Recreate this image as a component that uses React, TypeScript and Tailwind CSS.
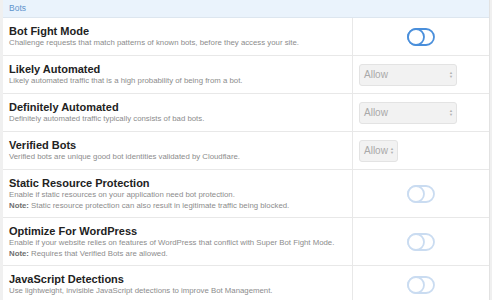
import React from 'react';

type Control =
  | { kind: 'toggle'; active: boolean }
  | { kind: 'select'; wide: boolean };

interface Setting {
  title: string;
  desc: string;
  note?: string;
  control: Control;
}

const SETTINGS: Setting[] = [
  {
    title: 'Bot Fight Mode',
    desc: 'Challenge requests that match patterns of known bots, before they access your site.',
    control: { kind: 'toggle', active: true },
  },
  {
    title: 'Likely Automated',
    desc: 'Likely automated traffic that is a high probability of being from a bot.',
    control: { kind: 'select', wide: true },
  },
  {
    title: 'Definitely Automated',
    desc: 'Definitely automated traffic typically consists of bad bots.',
    control: { kind: 'select', wide: true },
  },
  {
    title: 'Verified Bots',
    desc: 'Verified bots are unique good bot identities validated by Cloudflare.',
    control: { kind: 'select', wide: false },
  },
  {
    title: 'Static Resource Protection',
    desc: 'Enable if static resources on your application need bot protection.',
    note: 'Static resource protection can also result in legitimate traffic being blocked.',
    control: { kind: 'toggle', active: false },
  },
  {
    title: 'Optimize For WordPress',
    desc: 'Enable if your website relies on features of WordPress that conflict with Super Bot Fight Mode.',
    note: 'Requires that Verified Bots are allowed.',
    control: { kind: 'toggle', active: false },
  },
  {
    title: 'JavaScript Detections',
    desc: 'Use lightweight, invisible JavaScript detections to improve Bot Management.',
    control: { kind: 'toggle', active: false },
  },
];

function Toggle({ active }: { active: boolean }) {
  const color = active ? '#4a8fdb' : '#cadcf1';
  return (
    <svg width="28" height="18" viewBox="0 0 28 18" fill="none">
      <rect x="1" y="1" width="26" height="16" rx="8" stroke={color} strokeWidth="1.8" />
      <circle cx="9" cy="9" r="8" stroke={color} strokeWidth="1.8" fill="#fff" />
    </svg>
  );
}

function Select({ wide }: { wide: boolean }) {
  return (
    <div
      className={`flex items-center justify-between h-[22px] rounded-[3px] border border-[#e3e3e3] bg-[#f2f2f2] pl-[4px] pr-[3px] text-[10px] text-[#a9a9a9] ${
        wide ? 'w-[98px]' : 'w-[39px]'
      }`}
    >
      <span>Allow</span>
      <span className="flex flex-col text-[4px] leading-[4px] text-[#b0b0b0]">
        <span>▲</span>
        <span>▼</span>
      </span>
    </div>
  );
}

export default function App() {
  return (
    <div className="w-[492px] h-[300px] overflow-hidden bg-[#f0f0f0] pl-[3px] pr-[2px] font-['Liberation_Sans',Arial,sans-serif]">
      <div className="bg-white border-r border-[#e2e2e2] h-full">
        <div className="h-[18px] bg-[#eaf3fc] border-b border-[#dde6ef] pl-[6px] flex items-center text-[8.5px] text-[#5f93cc]">
          Bots
        </div>

        {SETTINGS.map((s) => (
          <div
            key={s.title}
            className={`grid grid-cols-[350px_1fr] border-b border-[#e8e8e8] ${s.note ? 'h-[48px]' : 'h-[38px]'}`}
          >
            <div className="pl-[6px] pt-[7px] border-r border-[#e8e8e8]">
              <div className="text-[11px] leading-[12px] font-bold text-[#222]">{s.title}</div>
              <div className="text-[7.8px] leading-[11px] text-[#8c8c8c] whitespace-nowrap">{s.desc}</div>
              {s.note && (
                <div className="text-[7.8px] leading-[11px] text-[#8c8c8c] whitespace-nowrap">
                  <span className="font-bold text-[#6e6e6e]">Note:</span> {s.note}
                </div>
              )}
            </div>
            <div
              className={`flex items-center ${
                s.control.kind === 'toggle' ? 'justify-center' : 'justify-start pl-[6px]'
              }`}
            >
              {s.control.kind === 'toggle' ? (
                <Toggle active={s.control.active} />
              ) : (
                <Select wide={s.control.wide} />
              )}
            </div>
          </div>
        ))}
      </div>
    </div>
  );
}
